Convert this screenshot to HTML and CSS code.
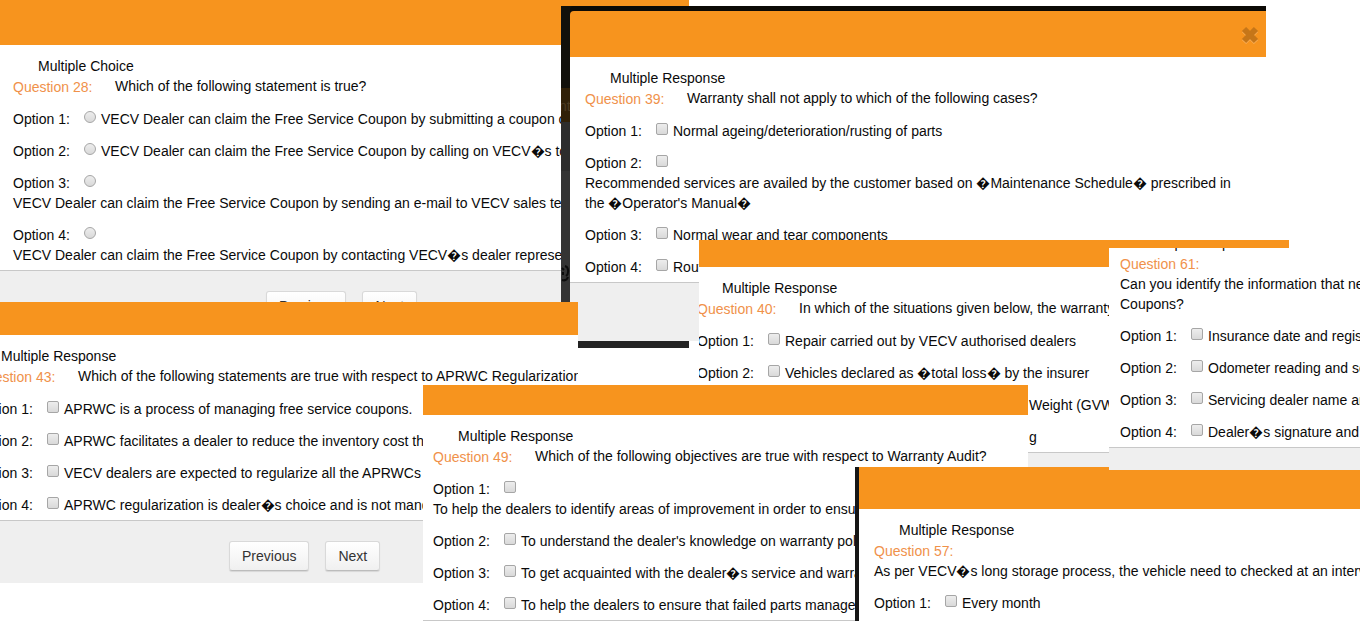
FILE: index.html
```html
<!DOCTYPE html>
<html lang="en">
<head>
<meta charset="utf-8">
<title>Warranty Assessment</title>
<link rel="stylesheet" href="styles.css">
</head>
<body>
<main class="canvas">

  <section class="panel q28">
    <header class="bar"></header>
    <form class="body">
      <p class="type">Multiple Choice</p>
      <div class="question"><span class="num">Question 28:</span><span class="ask">Which of the following statement is true?</span></div>
      <div class="option"><span class="key">Option 1:</span><input type="radio" name="q28" id="q28a"><label for="q28a">VECV Dealer can claim the Free Service Coupon by submitting a coupon c</label></div>
      <div class="option"><span class="key">Option 2:</span><input type="radio" name="q28" id="q28b"><label for="q28b">VECV Dealer can claim the Free Service Coupon by calling on VECV�s to</label></div>
      <div class="option long"><span class="key">Option 3:</span><input type="radio" name="q28" id="q28c"><label for="q28c">VECV Dealer can claim the Free Service Coupon by sending an e-mail to VECV sales te</label></div>
      <div class="option long"><span class="key">Option 4:</span><input type="radio" name="q28" id="q28d"><label for="q28d">VECV Dealer can claim the Free Service Coupon by contacting VECV�s dealer represe</label></div>
    </form>
    <footer class="foot"><button type="button">Previous</button><button type="button">Next</button></footer>
  </section>

  <div class="backdrop">
    <span class="ghost">nt</span>
    <svg class="scrawl" width="9" height="18" viewBox="0 0 9 18" aria-hidden="true"><path d="M1 4l2 2M4 2c4 1 4 8 1 10M2 8v3M1 16c3 1 5 0 6-3" fill="none" stroke="#0c0c0c" stroke-width="2"/></svg>
  </div>
  <section class="panel q39">
    <header class="bar">
      <button type="button" class="close" aria-label="Close"><svg width="20" height="20" viewBox="0 0 20 20"><path d="M4 5l12 12M16 5L4 17" stroke="#fbb05a" stroke-width="6"/><path d="M4 4l12 12M16 4L4 16" stroke="#c67618" stroke-width="6"/></svg></button>
    </header>
    <form class="body">
      <p class="type">Multiple Response</p>
      <div class="question"><span class="num">Question 39:</span><span class="ask">Warranty shall not apply to which of the following cases?</span></div>
      <div class="option"><span class="key">Option 1:</span><input type="checkbox" id="q39a"><label for="q39a">Normal ageing/deterioration/rusting of parts</label></div>
      <div class="option long"><span class="key">Option 2:</span><input type="checkbox" id="q39b"><label for="q39b">Recommended services are availed by the customer based on �Maintenance Schedule� prescribed in<br>the �Operator's Manual�</label></div>
      <div class="option"><span class="key">Option 3:</span><input type="checkbox" id="q39c"><label for="q39c">Normal wear and tear components</label></div>
      <div class="option"><span class="key">Option 4:</span><input type="checkbox" id="q39d"><label for="q39d">Rout</label></div>
    </form>
    <footer class="foot"></footer>
  </section>

  <section class="panel q43">
    <header class="bar"></header>
    <form class="body">
      <p class="type">Multiple Response</p>
      <div class="question"><span class="num">Question 43:</span><span class="ask">Which of the following statements are true with respect to APRWC Regularization</span></div>
      <div class="option"><span class="key">Option 1:</span><input type="checkbox" id="q43a"><label for="q43a">APRWC is a process of managing free service coupons.</label></div>
      <div class="option"><span class="key">Option 2:</span><input type="checkbox" id="q43b"><label for="q43b">APRWC facilitates a dealer to reduce the inventory cost th</label></div>
      <div class="option"><span class="key">Option 3:</span><input type="checkbox" id="q43c"><label for="q43c">VECV dealers are expected to regularize all the APRWCs</label></div>
      <div class="option"><span class="key">Option 4:</span><input type="checkbox" id="q43d"><label for="q43d">APRWC regularization is dealer�s choice and is not mand</label></div>
    </form>
    <footer class="foot"><button type="button">Previous</button><button type="button">Next</button></footer>
  </section>

  <section class="panel q40">
    <header class="bar"></header>
    <form class="body">
      <p class="type">Multiple Response</p>
      <div class="question"><span class="num">Question 40:</span><span class="ask">In which of the situations given below, the warranty</span></div>
      <div class="option"><span class="key">Option 1:</span><input type="checkbox" id="q40a"><label for="q40a">Repair carried out by VECV authorised dealers</label></div>
      <div class="option"><span class="key">Option 2:</span><input type="checkbox" id="q40b"><label for="q40b">Vehicles declared as �total loss� by the insurer</label></div>
      <p class="tail">Weight (GVW</p>
      <p class="tail">g</p>
    </form>
    <footer class="foot"></footer>
  </section>

  <section class="panel q49">
    <header class="bar"></header>
    <form class="body">
      <p class="type">Multiple Response</p>
      <div class="question"><span class="num">Question 49:</span><span class="ask">Which of the following objectives are true with respect to Warranty Audit?</span></div>
      <div class="option long"><span class="key">Option 1:</span><input type="checkbox" id="q49a"><label for="q49a">To help the dealers to identify areas of improvement in order to ensu</label></div>
      <div class="option"><span class="key">Option 2:</span><input type="checkbox" id="q49b"><label for="q49b">To understand the dealer's knowledge on warranty poli</label></div>
      <div class="option"><span class="key">Option 3:</span><input type="checkbox" id="q49c"><label for="q49c">To get acquainted with the dealer�s service and warra</label></div>
      <div class="option"><span class="key">Option 4:</span><input type="checkbox" id="q49d"><label for="q49d">To help the dealers to ensure that failed parts manage</label></div>
    </form>
    <footer class="foot"></footer>
  </section>

  <section class="panel q57">
    <header class="bar"></header>
    <form class="body">
      <p class="type">Multiple Response</p>
      <div class="question stacked"><span class="num">Question 57:</span><span class="ask">As per VECV�s long storage process, the vehicle need to checked at an interv</span></div>
      <div class="option"><span class="key">Option 1:</span><input type="checkbox" id="q57a"><label for="q57a">Every month</label></div>
    </form>
  </section>

  <section class="panel q61">
    <form class="body">
      <p class="type">Multiple Response</p>
      <div class="question stacked"><span class="num">Question 61:</span><span class="ask">Can you identify the information that nee<br>Coupons?</span></div>
      <div class="option"><span class="key">Option 1:</span><input type="checkbox" id="q61a"><label for="q61a">Insurance date and regist</label></div>
      <div class="option"><span class="key">Option 2:</span><input type="checkbox" id="q61b"><label for="q61b">Odometer reading and se</label></div>
      <div class="option"><span class="key">Option 3:</span><input type="checkbox" id="q61c"><label for="q61c">Servicing dealer name an</label></div>
      <div class="option"><span class="key">Option 4:</span><input type="checkbox" id="q61d"><label for="q61d">Dealer�s signature and</label></div>
    </form>
    <footer class="foot"></footer>
  </section>

</main>
</body>
</html>
```

FILE: styles.css
```css
* { box-sizing: border-box; }

body {
  margin: 0;
  background: #fff;
  color: #0a0a0a;
  font: 14px/20px "Liberation Sans", Arial, sans-serif;
}

p { margin: 0; }

.canvas {
  position: relative;
  min-height: 100vh;
  overflow: hidden;
}

/* Overlapping quiz windows */
.panel {
  position: absolute;
  display: flex;
  flex-direction: column;
  overflow: hidden;
  background: #fff;
  white-space: nowrap;
}

.bar { flex: none; height: 45px; background: #f7941e; }

.body { padding: 11px 0 5px 13px; }

.type { padding-left: 25px; }

.question { display: flex; height: 21px; }
.question .num { width: 102px; flex: none; padding-top: 1px; color: #f0914a; }
.question.stacked { display: block; height: auto; }
.stacked .num,
.stacked .ask { display: block; }

.option {
  display: flex;
  align-items: flex-start;
  margin-top: 12px;
}
.option .key { flex: none; width: 71px; }
.option label { padding-left: 5px; }
.option.long { flex-wrap: wrap; }
.option.long label { flex: 0 0 100%; padding-left: 0; }

.option input {
  appearance: none;
  flex: none;
  width: 12px;
  height: 12px;
  margin: 2px 0 0;
  border: 1px solid #a6a6a6;
  border-radius: 2px;
  background: linear-gradient(#ededed, #d9d9d9);
}
.option input[type="radio"] { border-radius: 50%; }

.tail { margin-top: 12px; }

.foot {
  flex: 1;
  display: flex;
  align-items: flex-start;
  gap: 16px;
  padding-top: 20px;
  border-top: 1px solid #c8c8c8;
  background: #efefef;
}

.foot button {
  height: 30px;
  padding: 0 12px;
  border: 1px solid #d9d9d9;
  border-bottom-color: #bcbcbc;
  border-radius: 3px;
  background: linear-gradient(#fff, #f0f0f0);
  box-shadow: 0 1px 1px rgba(0, 0, 0, 0.1);
  color: #333;
  font: inherit;
}

.q28 { left: 0; top: 0; width: 689px; height: 320px; }
.q28 .foot { padding-left: 266px; }

.backdrop {
  position: absolute;
  left: 561px;
  top: 6px;
  width: 128px;
  height: 342px;
  overflow: hidden;
  background: linear-gradient(#11100b 0 82px, #302008 82px 116px, #2d2d2d 116px 165px, #343434 165px 330px, #232323 330px);
}
.ghost {
  position: absolute;
  left: -2px;
  top: 90px;
  color: #4c3a22;
}
.scrawl { position: absolute; left: 0; top: 258px; }

.q39 {
  left: 570px;
  top: 11px;
  width: 696px;
  height: 330px;
  overflow: visible;
  border-radius: 4px 0 0 0;
  background: none;
  box-shadow: 0 -5px 0 #0c0a06;
}
.q39 .bar {
  display: flex;
  justify-content: flex-end;
  align-items: center;
  height: 46px;
  padding: 2px 6px 0 0;
  border-radius: 4px 0 0 0;
}
.q39 .body { padding-left: 15px; background: #fff; }
.q39 .foot { flex-basis: auto; width: 129px; }

.close {
  display: flex;
  padding: 0;
  border: 0;
  background: none;
}

.q43 { left: 0; top: 302px; width: 578px; height: 281px; }
.q43 .bar { height: 33px; }
.q43 .body { margin-left: -24px; padding-left: 0; }
.q43 .foot { padding-left: 229px; }

.q40 { left: 699px; top: 240px; width: 590px; height: 240px; }
.q40 .bar { height: 27px; }
.q40 .body { margin-left: -2px; padding-left: 0; }
.q40 .tail { padding-left: 332px; }

.q49 { left: 423px; top: 385px; width: 605px; height: 236px; }
.q49 .bar { height: 30px; }
.q49 .body { padding-left: 10px; }

.q57 { left: 855px; right: 0; top: 467px; height: 154px; border-left: 4px solid #161616; }
.q57 .bar { height: 42px; }
.q57 .body { padding-left: 15px; }

.q61 { left: 1109px; right: 0; top: 248px; height: 222px; }
.q61 .body { margin-top: -15px; padding: 0 0 5px 11px; }
```
